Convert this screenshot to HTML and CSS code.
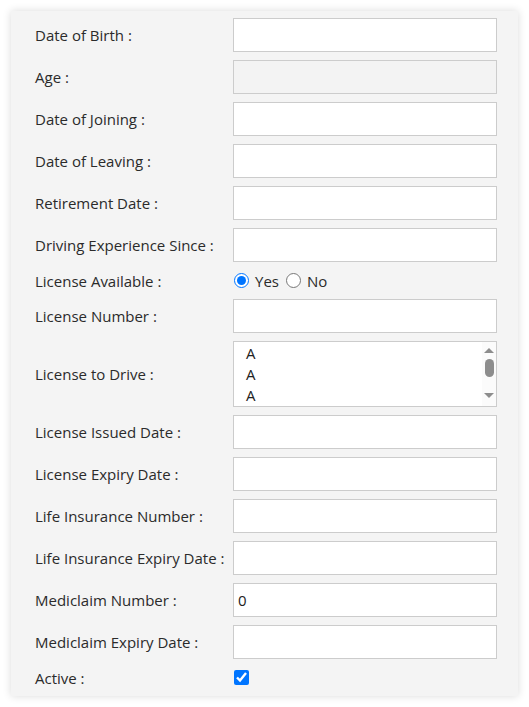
FILE: index.html
```html
<!DOCTYPE html>
<html>
<head>
<meta charset="utf-8">
<link rel="stylesheet" href="styles.css">
</head>
<body>
<div class="panel">
  <form class="form">
    <label class="lbl">Date of Birth :</label>
    <input class="field" type="text">
    <label class="lbl">Age :</label>
    <input class="field field-ro" type="text" readonly>
    <label class="lbl">Date of Joining :</label>
    <input class="field" type="text">
    <label class="lbl">Date of Leaving :</label>
    <input class="field" type="text">
    <label class="lbl">Retirement Date :</label>
    <input class="field" type="text">
    <label class="lbl">Driving Experience Since :</label>
    <input class="field" type="text">
    <label class="lbl">License Available :</label>
    <div class="radios">
      <input class="radio" type="radio" name="lic" checked><span class="rtext">Yes</span>
      <input class="radio" type="radio" name="lic"><span class="rtext">No</span>
    </div>
    <label class="lbl">License Number :</label>
    <input class="field" type="text">
    <label class="lbl">License to Drive :</label>
    <div class="listbox">
      <select class="list" multiple size="3">
        <option>A</option>
        <option>A</option>
        <option>A</option>
        <option>A</option>
        <option>A</option>
        <option>A</option>
        <option>A</option>
        <option>A</option>
      </select>
      <div class="sbar">
        <span class="arr arr-up"></span>
        <span class="thumb"></span>
        <span class="sbar-space"></span>
        <span class="arr arr-down"></span>
      </div>
    </div>
    <label class="lbl">License Issued Date :</label>
    <input class="field" type="text">
    <label class="lbl">License Expiry Date :</label>
    <input class="field" type="text">
    <label class="lbl">Life Insurance Number :</label>
    <input class="field" type="text">
    <label class="lbl">Life Insurance Expiry Date :</label>
    <input class="field" type="text">
    <label class="lbl">Mediclaim Number :</label>
    <input class="field" type="text" value="0">
    <label class="lbl">Mediclaim Expiry Date :</label>
    <input class="field" type="text">
    <label class="lbl">Active :</label>
    <div class="checkrow"><input class="check" type="checkbox" checked></div>
  </form>
</div>
</body>
</html>
```
FILE: styles.css
```css
html, body {
  margin: 0;
  padding: 0;
  background: #ffffff;
}
body {
  padding: 11px;
  font-family: "Open Sans", "Noto Sans", sans-serif;
  font-size: 15px;
  color: #2b2b2b;
}
.panel {
  width: 507px;
  box-sizing: border-box;
  background: #f4f4f4;
  box-shadow: 0 0 8px rgba(0, 0, 0, 0.15);
  padding: 7px 21px 8px 24px;
}
.form {
  display: grid;
  grid-template-columns: 198px 264px;
  row-gap: 8px;
  align-items: center;
  margin: 0;
}
.lbl {
  font-size: 15px;
  color: #2b2b2b;
  line-height: 20px;
}
.field {
  box-sizing: border-box;
  width: 264px;
  height: 34px;
  margin: 0;
  border: 1px solid #cccccc;
  border-radius: 0;
  background: #ffffff;
  padding: 0 4px;
  font-family: "Open Sans", "Noto Sans", sans-serif;
  font-size: 15px;
  color: #222222;
  outline: none;
}
.field-ro {
  background: #f3f3f3;
}
.radios {
  display: flex;
  align-items: center;
  gap: 6px;
  height: 21px;
}
.radio {
  width: 15px;
  height: 15px;
  margin: 0 0 0 1px;
}
.rtext {
  font-size: 15px;
  color: #2b2b2b;
}
.listbox {
  box-sizing: border-box;
  width: 264px;
  height: 66px;
  display: flex;
  border: 1px solid #cccccc;
  background: #ffffff;
}
.list {
  flex: 1;
  min-width: 0;
  height: 64px;
  margin: 0;
  border: none;
  border-radius: 0;
  background: #ffffff;
  padding: 1px 0 0 0;
  font-family: "Open Sans", "Noto Sans", sans-serif;
  font-size: 15px;
  color: #222222;
  outline: none;
  overflow: hidden;
}
.list option {
  padding: 0 12px 1px 12px;
}
.sbar {
  width: 14px;
  display: flex;
  flex-direction: column;
  align-items: center;
  background: #fbfbfb;
  padding: 6px 0 8px 0;
  box-sizing: border-box;
}
.arr {
  width: 0;
  height: 0;
  border-left: 5px solid transparent;
  border-right: 5px solid transparent;
}
.arr-up {
  border-bottom: 5px solid #8d8d8d;
}
.arr-down {
  border-top: 5px solid #8d8d8d;
}
.thumb {
  width: 9px;
  height: 18px;
  margin-top: 6px;
  border-radius: 5px;
  background: #8d8d8d;
}
.sbar-space {
  flex: 1;
}
.checkrow {
  display: flex;
  align-items: center;
  height: 21px;
}
.check {
  width: 15px;
  height: 15px;
  margin: 0 0 0 1px;
}
```
